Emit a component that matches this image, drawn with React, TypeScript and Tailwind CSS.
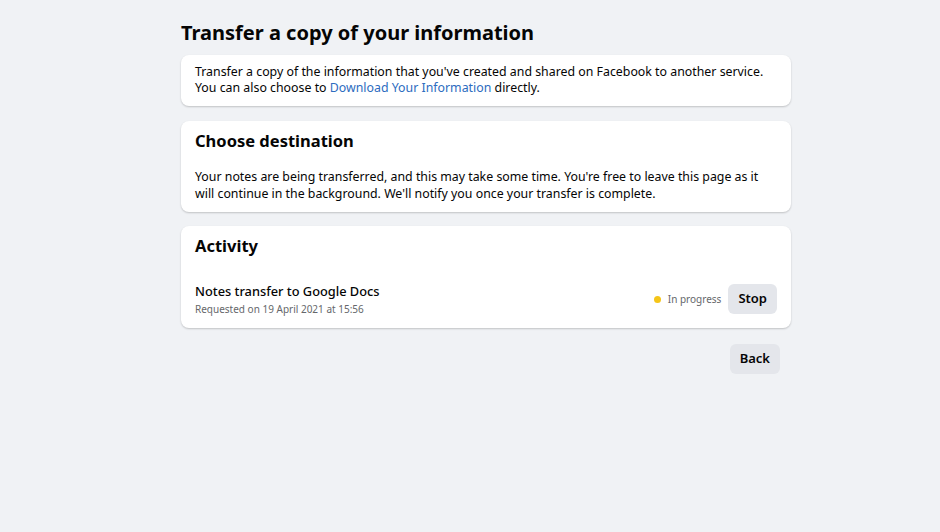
export default function App() {
  return (
    <div className="min-h-[532px] w-[940px] bg-[#f0f2f5] text-[#050505]" style={{ fontFamily: '"Segoe UI", "Noto Sans", "Open Sans", sans-serif' }}>
      <div className="ml-[181px] w-[610px] pt-[19px]">
        <h1 className="text-[20px] font-bold leading-[28px]">Transfer a copy of your information</h1>
        <div className="mt-[8px] rounded-lg bg-white px-[14px] pb-[10px] pt-[9px] shadow-[0_1px_2px_rgba(0,0,0,0.2)]">
          <p className="text-[12.35px] leading-[16px]">
            Transfer a copy of the information that you've created and shared on Facebook to another service.
            <br />
            You can also choose to <span className="text-[#2d6cc0]">Download Your Information</span> directly.
          </p>
        </div>
        <div className="mt-[15px] rounded-lg bg-white px-[14px] pb-[10px] pt-[9px] shadow-[0_1px_2px_rgba(0,0,0,0.2)]">
          <h2 className="text-[16.5px] font-bold leading-[22px]">Choose destination</h2>
          <p className="mt-[16px] text-[12.35px] leading-[17px]">
            Your notes are being transferred, and this may take some time. You're free to leave this page as it
            <br />
            will continue in the background. We'll notify you once your transfer is complete.
          </p>
        </div>
        <div className="mt-[14px] rounded-lg bg-white pl-[14px] pr-[14px] pb-[12px] pt-[9px] shadow-[0_1px_2px_rgba(0,0,0,0.2)]">
          <h2 className="text-[16.5px] font-bold leading-[22px]">Activity</h2>
          <div className="mt-[25px] flex items-center justify-between">
            <div>
              <div className="text-[12.8px] font-medium leading-[18px]">Notes transfer to Google Docs</div>
              <div className="mt-[2px] text-[10px] leading-[14px] text-[#65676b]">Requested on 19 April 2021 at 15:56</div>
            </div>
            <div className="flex items-center">
              <span className="h-[7px] w-[7px] rounded-full bg-[#f5c518]" />
              <span className="ml-[7px] text-[10px] text-[#65676b]">In progress</span>
              <button className="ml-[7px] h-[30px] rounded-md bg-[#e4e6eb] px-[10px] text-[13px] font-semibold">Stop</button>
            </div>
          </div>
        </div>
        <div className="mt-[16px] flex justify-end pr-[11px]">
          <button className="h-[30px] rounded-md bg-[#e4e6eb] px-[10px] text-[13px] font-semibold">Back</button>
        </div>
      </div>
    </div>
  );
}
